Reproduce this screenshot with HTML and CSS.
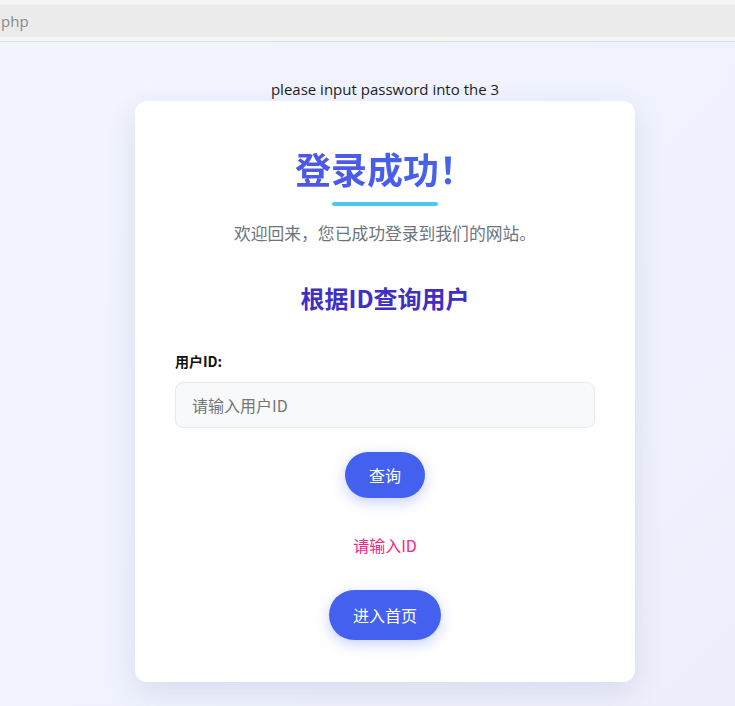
FILE: index.html
```html
<!DOCTYPE html>
<html lang="zh-CN">
<head>
<meta charset="utf-8">
<title>登录成功</title>
<link rel="stylesheet" href="styles.css">
</head>
<body>
<div class="topbar">
  <div class="topbar-field">php</div>
</div>
<main class="page">
  <p class="hint">please input password into the 3</p>
  <section class="card">
    <h1 class="title">登录成功！</h1>
    <div class="title-bar"></div>
    <p class="subtitle">欢迎回来，您已成功登录到我们的网站。</p>
    <h2 class="section-title">根据ID查询用户</h2>
    <form class="query-form">
      <label class="field-label" for="uid">用户ID:</label>
      <input class="field-input" id="uid" type="text" placeholder="请输入用户ID">
      <button class="btn btn-query" type="button">查询</button>
    </form>
    <p class="message">请输入ID</p>
    <button class="btn btn-home" type="button">进入首页</button>
  </section>
</main>
</body>
</html>
```

FILE: styles.css
```css
* { box-sizing: border-box; }

html, body {
  margin: 0;
  padding: 0;
}

body {
  font-family: "Open Sans", "Noto Sans CJK SC", sans-serif;
  background: linear-gradient(135deg, #f2f5ff 0%, #eff2fe 60%, #eeeffc 100%);
  min-height: 706px;
  color: #212529;
}

.topbar {
  background: #f5f5f5;
  padding: 5px 0 4px;
  border-bottom: 1px solid #dedede;
}

.topbar-field {
  height: 32px;
  line-height: 32px;
  background: #ebebeb;
  color: #8a8a8a;
  font-family: "Open Sans", sans-serif;
  font-size: 15px;
  padding-left: 1px;
}

.page {
  display: flex;
  flex-direction: column;
  align-items: center;
  padding: 37px 0 25px 35px;
}

.hint {
  margin: 0;
  font-family: "Open Sans", sans-serif;
  font-size: 15px;
  line-height: 20px;
  color: #1d1d1d;
}

.card {
  width: 500px;
  margin-top: 2px;
  background: #ffffff;
  border-radius: 12px;
  padding: 40px 40px 42px;
  box-shadow: 0 10px 30px rgba(55, 65, 120, 0.12);
  display: flex;
  flex-direction: column;
  align-items: center;
  font-family: "Noto Sans CJK SC", sans-serif;
}

.title {
  margin: 5px 0 0;
  font-size: 36px;
  line-height: 44px;
  font-weight: 700;
  color: #4a5de9;
  background: linear-gradient(90deg, #4d57e6, #4465ec);
  -webkit-background-clip: text;
  background-clip: text;
  -webkit-text-fill-color: transparent;
}

.title-bar {
  width: 106px;
  height: 4px;
  border-radius: 2px;
  background: #4cc9f0;
  margin-top: 12px;
}

.subtitle {
  margin: 15px 0 0;
  font-size: 16.8px;
  line-height: 24px;
  color: #6c757d;
}

.section-title {
  margin: 38px 0 0;
  font-size: 24px;
  line-height: 30px;
  font-weight: 700;
  color: #3f2fc4;
}

.query-form {
  align-self: stretch;
  display: flex;
  flex-direction: column;
  align-items: center;
  margin-top: 38px;
}

.field-label {
  align-self: flex-start;
  font-size: 14px;
  line-height: 20px;
  font-weight: 700;
  color: #111;
}

.field-input {
  align-self: stretch;
  margin-top: 11px;
  height: 46px;
  border: 1px solid #e6e9ee;
  border-radius: 8px;
  background: #f8f9fa;
  padding: 0 16px;
  font-family: "Noto Sans CJK SC", sans-serif;
  font-size: 16px;
  color: #333;
  outline: none;
}

.field-input::placeholder {
  color: #757575;
}

.btn {
  border: none;
  background: #4361ee;
  color: #ffffff;
  font-family: "Noto Sans CJK SC", sans-serif;
  font-size: 16px;
  padding: 0 24px;
  box-shadow: 0 4px 14px rgba(67, 97, 238, 0.3);
  cursor: pointer;
}

.btn-query {
  margin-top: 24px;
  height: 46px;
  border-radius: 23px;
}

.message {
  margin: 35px 0 0;
  font-size: 16px;
  line-height: 24px;
  color: #f72585;
}

.btn-home {
  margin-top: 33px;
  height: 50px;
  border-radius: 25px;
}
```
